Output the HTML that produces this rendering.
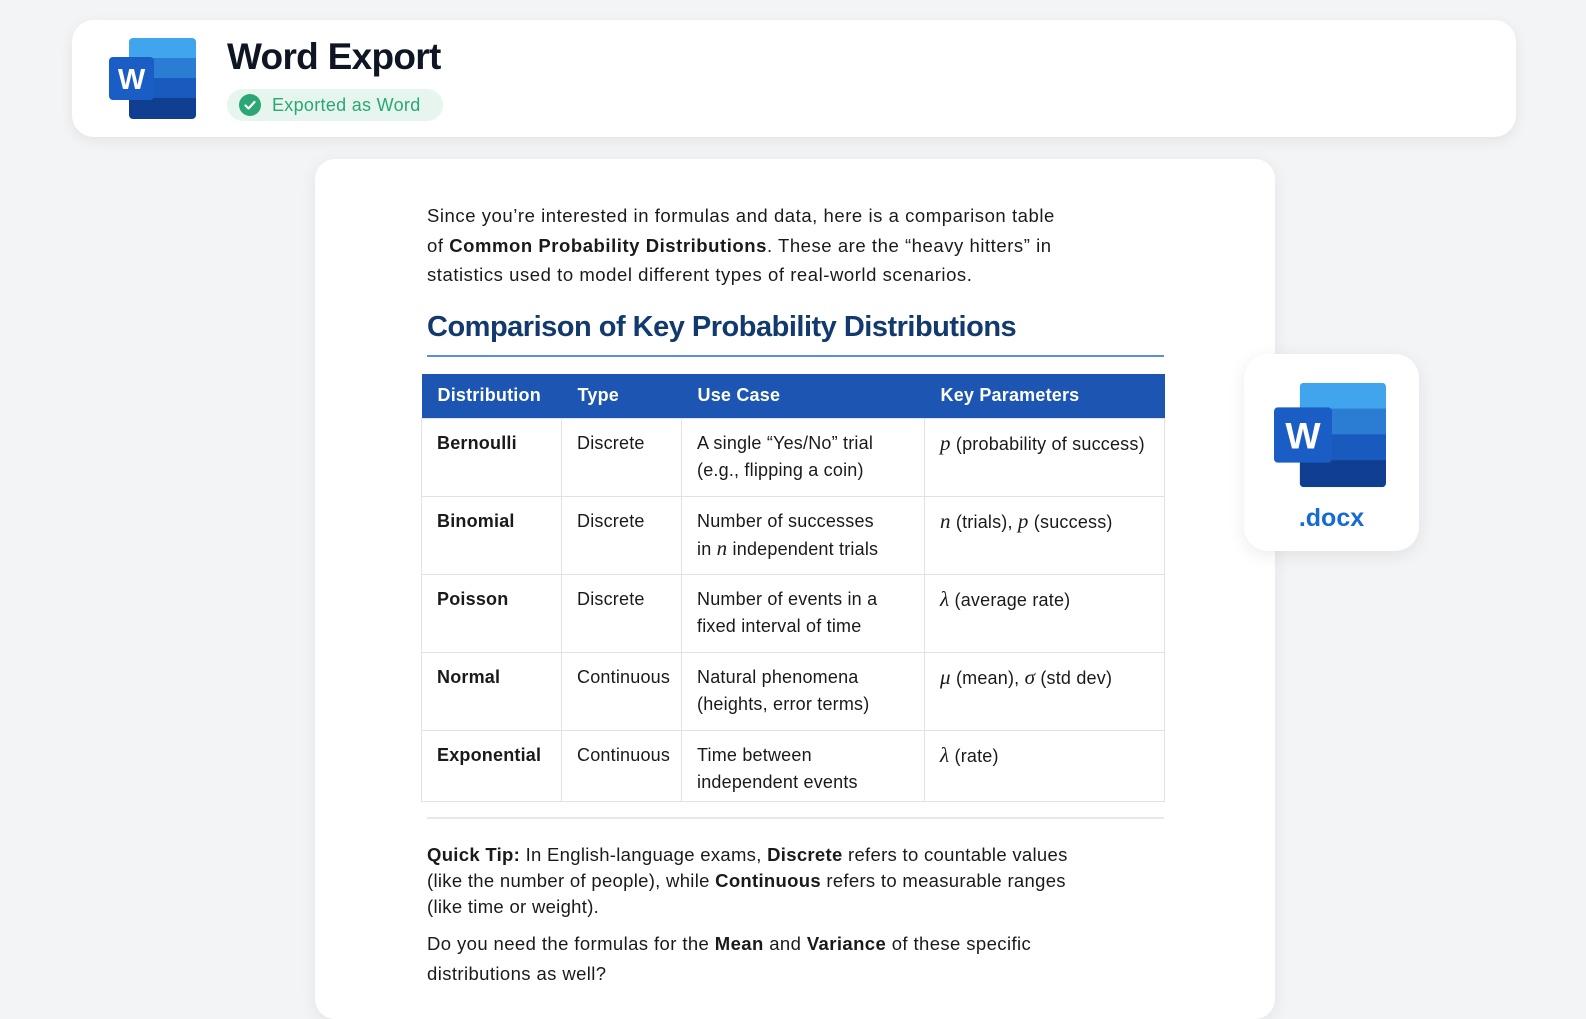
<!DOCTYPE html>
<html><head><meta charset="utf-8"><style>
*{box-sizing:border-box;margin:0;padding:0}
body{width:1586px;height:992px;overflow:hidden;background:#f3f4f6;font-family:"Liberation Sans",Arial,sans-serif;color:#111;position:relative}
.hdr{position:absolute;left:72px;top:20px;width:1444px;height:117px;background:#fff;border-radius:22px;box-shadow:0 4px 14px rgba(0,0,0,.07)}
.title{position:absolute;left:227px;top:36px;font-size:37px;font-weight:bold;color:#0f1623;letter-spacing:-0.7px}
.badge{position:absolute;left:227px;top:89px;width:216px;height:32px;border-radius:16px;background:#e6f6ee;color:#2aa774;font-size:18px;line-height:32px;padding-left:45px;letter-spacing:0.3px}
.badge .ck{position:absolute;left:12px;top:5px;width:22px;height:22px;border-radius:50%;background:#2aa774}
.doc{position:absolute;left:315px;top:159px;width:960px;height:860px;background:#fff;border-radius:20px;box-shadow:0 4px 18px rgba(0,0,0,.07)}
.p{position:absolute;left:427px;font-size:18.5px;line-height:29.5px;color:#1a1a1a;letter-spacing:0.55px;white-space:nowrap}
h2{position:absolute;left:427px;top:311px;font-size:29px;color:#123a6e;letter-spacing:-0.5px}
.hl{position:absolute;left:427px;top:355px;width:737px;height:2px;background:#5b8ed6}
table{position:absolute;left:421px;top:374px;width:743px;border-collapse:collapse;font-size:18px;letter-spacing:0.2px;table-layout:fixed}
th{background:#1c55b2;color:#fff;text-align:left;height:44px;padding:0 16px;font-weight:bold;border:none}
td{border:1px solid #dfe2e7;vertical-align:top;padding:11px 15px 0;line-height:27px;color:#1a1a1a;white-space:nowrap}
tr.r td{height:78px}
i.m{font-family:"Liberation Serif",serif;font-size:21px}
.dv{position:absolute;left:427px;top:817px;width:737px;height:2px;background:#e6e8ec}
.dx{position:absolute;left:1244px;top:354px;width:175px;height:197px;background:#fff;border-radius:24px;box-shadow:0 4px 18px rgba(0,0,0,.08)}
.dx span{position:absolute;left:0;width:100%;top:150px;text-align:center;color:#1769d4;font-size:25px;font-weight:bold}
</style></head><body>
<div class="hdr"></div>
<svg style="position:absolute;left:109px;top:38px" width="87" height="81" viewBox="0 0 87 81">
<defs><clipPath id="c1"><rect x="20" y="0" width="67" height="81" rx="4"/></clipPath></defs>
<g clip-path="url(#c1)"><rect x="20" y="0" width="67" height="21" fill="#41a5ee"/><rect x="20" y="20" width="67" height="21" fill="#2b7cd3"/><rect x="20" y="40" width="67" height="21" fill="#185abd"/><rect x="20" y="60" width="67" height="21" fill="#103f91"/></g>
<rect x="0" y="19" width="45" height="43" rx="4" fill="#1a5dc4"/>
<text x="22.5" y="51" text-anchor="middle" fill="#fff" font-family="Liberation Sans" font-weight="bold" font-size="29">W</text></svg>
<div class="title">Word Export</div>
<div class="badge"><span class="ck"><svg width="22" height="22"><path d="M6.5 11.5l3 3 6-6.5" stroke="#fff" stroke-width="2.2" fill="none" stroke-linecap="round" stroke-linejoin="round"/></svg></span>Exported as Word</div>
<div class="doc"></div>
<div class="p" style="top:201px">Since you’re interested in formulas and data, here is a comparison table<br>of <b>Common Probability Distributions</b>. These are the “heavy hitters” in<br>statistics used to model different types of real-world scenarios.</div>
<h2>Comparison of Key Probability Distributions</h2>
<div class="hl"></div>
<table>
<colgroup><col style="width:140px"><col style="width:120px"><col style="width:243px"><col style="width:240px"></colgroup>
<tr><th>Distribution</th><th>Type</th><th>Use Case</th><th>Key Parameters</th></tr>
<tr class="r"><td><b>Bernoulli</b></td><td>Discrete</td><td>A single “Yes/No” trial<br>(e.g., flipping a coin)</td><td><i class="m">p</i> (probability of success)</td></tr>
<tr class="r"><td><b>Binomial</b></td><td>Discrete</td><td>Number of successes<br>in <i class="m">n</i> independent trials</td><td><i class="m">n</i> (trials), <i class="m">p</i> (success)</td></tr>
<tr class="r"><td><b>Poisson</b></td><td>Discrete</td><td>Number of events in a<br>fixed interval of time</td><td><i class="m">λ</i> (average rate)</td></tr>
<tr class="r"><td><b>Normal</b></td><td>Continuous</td><td>Natural phenomena<br>(heights, error terms)</td><td><i class="m">μ</i> (mean), <i class="m">σ</i> (std dev)</td></tr>
<tr><td style="height:71px"><b>Exponential</b></td><td>Continuous</td><td>Time between<br>independent events</td><td><i class="m">λ</i> (rate)</td></tr>
</table>
<div class="dv"></div>
<div class="p" style="top:842px;line-height:26px;letter-spacing:0.3px"><b>Quick Tip:</b> In English-language exams, <b>Discrete</b> refers to countable values<br>(like the number of people), while <b>Continuous</b> refers to measurable ranges<br>(like time or weight).</div>
<div class="p" style="top:929px;letter-spacing:0.4px"><span>Do you need the formulas for the <b>Mean</b> and <b>Variance</b> of these specific<br>distributions as well?</span></div>
<div class="dx"><span>.docx</span></div>
<svg style="position:absolute;left:1274px;top:382px" width="112" height="106" viewBox="0 0 87 81">
<defs><clipPath id="c2"><rect x="20" y="0" width="67" height="81" rx="3"/></clipPath></defs>
<g clip-path="url(#c2)"><rect x="20" y="0" width="67" height="21" fill="#41a5ee"/><rect x="20" y="20" width="67" height="21" fill="#2b7cd3"/><rect x="20" y="40" width="67" height="21" fill="#185abd"/><rect x="20" y="60" width="67" height="21" fill="#103f91"/></g>
<rect x="0" y="19" width="45" height="43" rx="3" fill="#1a5dc4"/>
<text x="22.5" y="51" text-anchor="middle" fill="#fff" font-family="Liberation Sans" font-weight="bold" font-size="29">W</text></svg>
</body></html>
